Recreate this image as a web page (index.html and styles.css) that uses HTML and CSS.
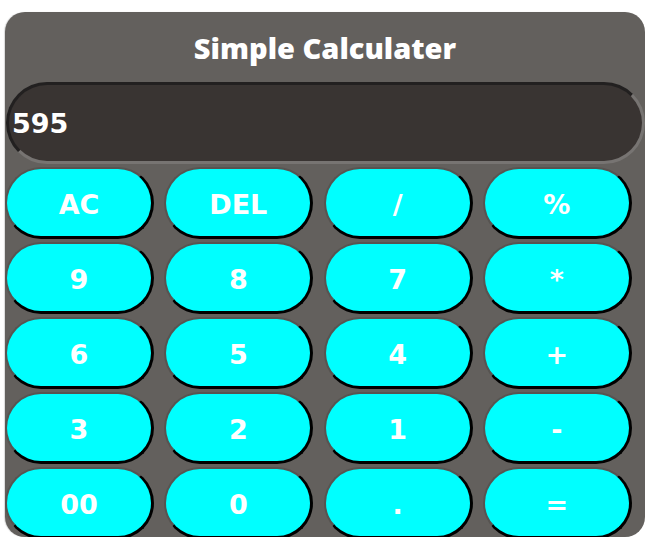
FILE: index.html
```html
<!DOCTYPE html>
<html>
<head>
<meta charset="utf-8">
<link rel="stylesheet" href="styles.css">
</head>
<body>
<div class="calc">
  <h1 class="title">Simple Calculater</h1>
  <div class="display">595</div>
  <div class="keys">
    <button class="key">AC</button>
    <button class="key">DEL</button>
    <button class="key">/</button>
    <button class="key">%</button>
    <button class="key">9</button>
    <button class="key">8</button>
    <button class="key">7</button>
    <button class="key">*</button>
    <button class="key">6</button>
    <button class="key">5</button>
    <button class="key">4</button>
    <button class="key">+</button>
    <button class="key">3</button>
    <button class="key">2</button>
    <button class="key">1</button>
    <button class="key">-</button>
    <button class="key">00</button>
    <button class="key">0</button>
    <button class="key">.</button>
    <button class="key">=</button>
  </div>
</div>
</body>
</html>
```
FILE: styles.css
```css
html, body {
  margin: 0;
  padding: 0;
  background: #ffffff;
}

.calc {
  box-sizing: border-box;
  width: 640px;
  height: 525px;
  margin: 12px 0 0 5px;
  background: #63605d;
  border-radius: 20px;
  box-shadow: -1px 0 1px rgba(0, 0, 0, 0.15);
}

.title {
  margin: 0;
  height: 70px;
  line-height: 72px;
  text-align: center;
  font-family: "Open Sans", sans-serif;
  font-weight: 800;
  font-size: 29px;
  color: #ffffff;
}

.display {
  box-sizing: border-box;
  height: 82px;
  margin-left: 1px;
  padding-left: 3px;
  display: flex;
  align-items: center;
  background: #393432;
  border: 3px solid;
  border-color: #222020 #777472 #777472 #222020;
  border-radius: 41px;
  font-family: "DejaVu Sans", sans-serif;
  font-weight: 700;
  font-size: 27px;
  color: #ffffff;
}

.keys {
  display: grid;
  grid-template-columns: repeat(4, 149px);
  grid-auto-rows: 72px;
  column-gap: 10.3px;
  row-gap: 3px;
  margin-top: 3px;
}

.key {
  box-sizing: border-box;
  margin: 0;
  padding: 4px 0 0 0;
  background: #00ffff;
  border-style: solid;
  border-width: 2px 3px 3px 2px;
  border-color: #575451 #000000 #000000 #575451;
  border-radius: 36px;
  font-family: "DejaVu Sans", sans-serif;
  font-weight: 700;
  font-size: 27px;
  color: #ffffff;
}
```
